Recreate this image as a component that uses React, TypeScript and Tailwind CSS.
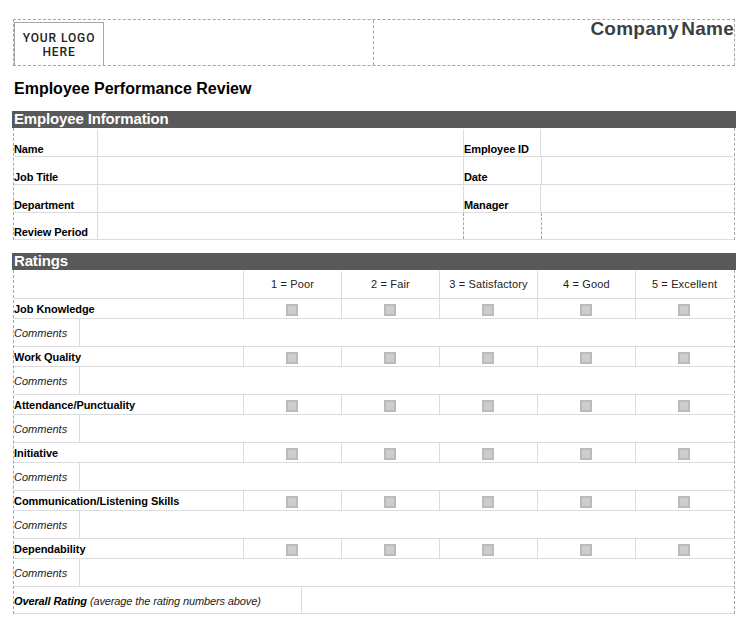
import React from 'react';

const infoRows = [
  { label: 'Name', side: 'Employee ID', split: 'w-[78px]', h: 'h-[28px]' },
  { label: 'Job Title', side: 'Date', split: 'w-[79px]', h: 'h-[28px]' },
  { label: 'Department', side: 'Manager', split: 'w-[78px]', h: 'h-[28px]' },
  { label: 'Review Period', side: '', split: 'w-[79px]', h: 'h-[27px]' },
];

const ratingHeads = ['1 = Poor', '2 = Fair', '3 = Satisfactory', '4 = Good', '5 = Excellent'];

const skills = [
  'Job Knowledge',
  'Work Quality',
  'Attendance/Punctuality',
  'Initiative',
  'Communication/Listening Skills',
  'Dependability',
];

const Checkbox = () => (
  <div className="w-[12px] h-[12px] bg-[#cdcdcd] border-2 border-[#bababa]" />
);

const SectionBar = ({ title }: { title: string }) => (
  <div className="-ml-px w-[724px] h-[17px] bg-[#595959] pl-[2px] pb-px flex items-center text-[15px] leading-[16px] tracking-[-0.15px] font-bold text-white">
    {title}
  </div>
);

export default function App() {
  return (
    <div className="w-[746px] h-[621px] overflow-hidden bg-white pl-[13px] pt-[19px] font-['Liberation_Sans',Arial,sans-serif] text-black">
      {/* company header */}
      <div className="w-[722px] h-[47px] flex border border-dashed border-[#a6a6a6]">
        <div className="w-[360px] pt-[2px] border-r border-dashed border-[#a6a6a6]">
          <div className="w-[90px] h-[43px] pt-[2px] border-t border-x border-[#a6a6a6] flex items-center justify-center text-center text-[12px] leading-[14px] tracking-[0.9px] font-medium text-[#222] font-['Roboto',sans-serif]">
            YOUR LOGO
            <br />
            HERE
          </div>
        </div>
        <div className="flex-1 text-right text-[19px] leading-[18px] font-bold text-[#3b3f42] [word-spacing:-3px] tracking-[0.25px]">
          Company Name
        </div>
      </div>

      <h1 className="mt-[13px] ml-px h-[19px] text-[16px] leading-[19px] font-bold">Employee Performance Review</h1>

      <div className="mt-[13px]">
        <SectionBar title="Employee Information" />
      </div>

      {/* employee info */}
      <div className="w-[722px] pt-px border-x border-dashed border-[#a6a6a6]">
        {infoRows.map((row) => (
          <div key={row.label} className={`${row.h} flex border-b border-[#dcdcdc] text-[11px] leading-[13px] tracking-[-0.1px] font-bold`}>
            <div className="w-[84px] flex items-end border-r border-[#dcdcdc]">{row.label}</div>
            <div className="w-[365px]" />
            <div
              className={`${row.split} flex items-end border-x ${
                row.side ? 'border-[#dcdcdc]' : 'border-dashed border-[#a6a6a6]'
              }`}
            >
              {row.side}
            </div>
          </div>
        ))}
      </div>

      <div className="mt-[13px]">
        <SectionBar title="Ratings" />
      </div>

      {/* ratings table */}
      <div className="w-[722px] pt-px border-x border-dashed border-[#a6a6a6]">
        <div className="h-[28px] grid grid-cols-[229px_repeat(5,98px)] border-b border-[#dcdcdc] text-[11px] tracking-[0.15px] text-[#222]">
          <div />
          {ratingHeads.map((head) => (
            <div key={head} className="flex items-center justify-center border-l border-[#dcdcdc]">
              {head}
            </div>
          ))}
        </div>
        {skills.map((skill) => (
          <React.Fragment key={skill}>
            <div className="h-[20px] grid grid-cols-[229px_repeat(5,98px)] border-b border-[#dcdcdc]">
              <div className="flex items-center pt-[2px] text-[11px] tracking-[-0.05px] font-bold">{skill}</div>
              {[1, 2, 3, 4, 5].map((n) => (
                <div key={n} className="flex items-center justify-center pt-[2px] pr-px border-l border-[#dcdcdc]">
                  <Checkbox />
                </div>
              ))}
            </div>
            <div className="h-[28px] flex border-b border-[#dcdcdc]">
              <div className="w-[66px] flex items-center pt-[2px] border-r border-[#dcdcdc] text-[11px] italic text-[#222]">
                Comments
              </div>
            </div>
          </React.Fragment>
        ))}
        <div className="h-[27px] flex border-b border-[#dcdcdc]">
          <div className="w-[288px] flex items-center gap-[3px] pt-[2px] border-r border-[#dcdcdc] text-[11px] italic tracking-[-0.12px] text-[#222]">
            <span className="font-bold text-black">Overall Rating</span>
            <span>(average the rating numbers above)</span>
          </div>
        </div>
      </div>
    </div>
  );
}
